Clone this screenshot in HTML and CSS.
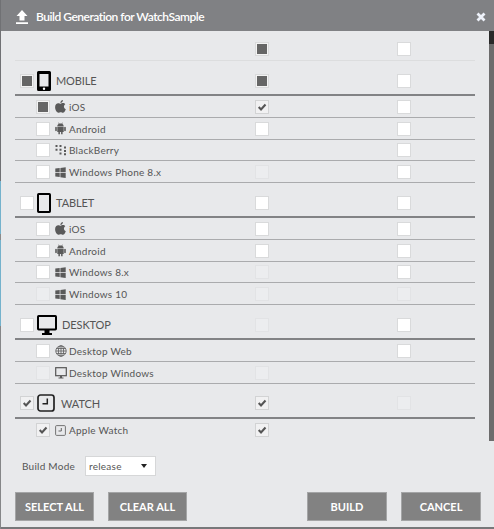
FILE: index.html
```html
<!DOCTYPE html>
<html lang="en">
<head>
<meta charset="utf-8">
<title>Build Generation for WatchSample</title>
<link rel="stylesheet" href="styles.css">
</head>
<body>
<svg class="defs" aria-hidden="true">
  <symbol id="tick" viewBox="0 0 12 12"><path d="M2.7 6.1 5 8.4 9.5 3.5" fill="none" stroke="#555" stroke-width="2.1"/></symbol>
  <symbol id="phone" viewBox="0 0 14 20"><path fill-rule="evenodd" d="M1.5 0h11Q14 0 14 1.500v17Q14 20 12.500 20h-11Q0 20 0 18.500v-17Q0 0 1.500 0ZM2.500 3v12.500h9V3Z"/><circle cx="7" cy="17.700" r="1.200" fill="#fff"/></symbol>
  <symbol id="tablet" viewBox="0 0 14 20"><rect x="1" y="1" width="12" height="18" rx=".7" fill="none" stroke="#000" stroke-width="2"/></symbol>
  <symbol id="monitor" viewBox="0 0 20 20"><rect x="1" y="1" width="18" height="13.500" rx=".7" fill="none" stroke="#000" stroke-width="2"/><path d="M7.500 15h5v3H15v2H5v-2h2.500z"/></symbol>
  <symbol id="watch" viewBox="0 0 18 18"><rect x="1" y="1" width="16" height="16" rx="2.500" fill="none" stroke="#222" stroke-width="1.700"/><path d="M10.300 4.500v5.300H5.500" fill="none" stroke="#222" stroke-width="1.500"/></symbol>
  <symbol id="apple" viewBox="0 0 11 13"><path d="M7.900 0c.1 1.600-1.100 2.900-2.500 3C5.200 1.500 6.500.2 7.900 0ZM5.600 3.700c.6 0 1.300-.6 2.400-.6 1 0 1.800.5 2.300 1.200-2 1.200-1.700 4 .5 4.900-.6 1.700-1.700 3.500-2.900 3.500-.9 0-1.200-.5-2.200-.5s-1.400.5-2.200.5C1.900 12.700.1 9.800.1 7.200c0-2.500 1.500-4 3.100-4 1.100 0 1.800.5 2.400.5Z"/></symbol>
  <symbol id="android" viewBox="0 0 11 13"><path d="M2.300 4.500C2.300 3 3 2.200 3.800 1.800L3.200.8l.4-.2.7 1q1.200-.4 2.400 0l.7-1 .4.2-.6 1c.8.400 1.500 1.200 1.500 2.700ZM2.300 5h6.400v5H7.600v2.300H6.100V10H4.900v2.300H3.400V10H2.300ZM.2 5.200q.8-.8 1.600 0v3.600q-.8.800-1.600 0ZM9.200 5.200q.8-.8 1.600 0v3.600q-.8.800-1.600 0Z"/></symbol>
  <symbol id="berry" viewBox="0 0 12 12"><path d="M.5 1h2v2h-2zM4.500 1h2v2h-2zM.5 4.800h2v2h-2zM4.500 4.800h2v2h-2zM4.500 8.500h2v2h-2zM9 2.500h2v2H9zM9 6h2v2H9zM9 9.200h2v2H9z"/></symbol>
  <symbol id="windows" viewBox="0 0 11 11"><path d="M.3 1.600 4.700 1v4.200H.3ZM5.400.9 10.700.2v5H5.400ZM.3 5.900h4.400v4.200L.3 9.500ZM5.400 5.900h5.300v5l-5.300-.7Z"/></symbol>
  <symbol id="globe" viewBox="0 0 12 12"><g fill="none" stroke="#5a5a5a" stroke-width=".8"><circle cx="6" cy="6" r="5.200"/><ellipse cx="6" cy="6" rx="2.600" ry="5.200"/><path d="M6 .8v10.400M.8 6h10.400M1.500 3.500h9M1.500 8.500h9"/></g></symbol>
  <symbol id="screen" viewBox="0 0 12 12"><rect x=".7" y=".7" width="10.600" height="8" fill="none" stroke="#555" stroke-width="1.200"/><path d="M5 9h2v1.500h1.500v1h-5v-1H5z"/></symbol>
  <symbol id="smallwatch" viewBox="0 0 11 11"><rect x=".6" y=".6" width="9.800" height="9.800" rx="1" fill="none" stroke="#666" stroke-width=".9"/><path d="M6.300 3v3H3.500" fill="none" stroke="#666"/></symbol>
</svg>
<div class="dialog">
  <header class="titlebar">
    <svg class="upload" viewBox="0 0 12 14"><path d="M6 0 11.500 6H8.500v4.500h-5V6h-3ZM0 12.300h12V14H0Z"/></svg>
    <h1>Build Generation for WatchSample</h1>
    <svg class="close" viewBox="0 0 10 10"><path d="M1.500 1.500l7 7M8.500 1.500l-7 7"/></svg>
  </header>
  <main class="list">
    <div class="row top"><div></div><div><i class="box part"></i></div><div><i class="box"></i></div></div>

    <div class="row group"><div class="name"><i class="box part"></i><svg class="i-phone"><use href="#phone"/></svg><span>MOBILE</span></div><div><i class="box part"></i></div><div><i class="box"></i></div></div>
    <div class="row"><div class="name"><i class="box part"></i><svg class="tall"><use href="#apple"/></svg><span>iOS</span></div><div><i class="box"><svg><use href="#tick"/></svg></i></div><div><i class="box"></i></div></div>
    <div class="row"><div class="name"><i class="box"></i><svg class="tall"><use href="#android"/></svg><span>Android</span></div><div><i class="box"></i></div><div><i class="box"></i></div></div>
    <div class="row"><div class="name"><i class="box"></i><svg class="wide"><use href="#berry"/></svg><span>BlackBerry</span></div><div></div><div><i class="box"></i></div></div>
    <div class="row"><div class="name"><i class="box"></i><svg><use href="#windows"/></svg><span>Windows Phone 8.x</span></div><div><i class="box off"></i></div><div><i class="box"></i></div></div>

    <div class="row group"><div class="name"><i class="box"></i><svg class="i-phone"><use href="#tablet"/></svg><span>TABLET</span></div><div><i class="box"></i></div><div><i class="box"></i></div></div>
    <div class="row"><div class="name"><i class="box"></i><svg class="tall"><use href="#apple"/></svg><span>iOS</span></div><div><i class="box"></i></div><div><i class="box"></i></div></div>
    <div class="row"><div class="name"><i class="box"></i><svg class="tall"><use href="#android"/></svg><span>Android</span></div><div><i class="box"></i></div><div><i class="box"></i></div></div>
    <div class="row"><div class="name"><i class="box"></i><svg><use href="#windows"/></svg><span>Windows 8.x</span></div><div><i class="box off"></i></div><div><i class="box"></i></div></div>
    <div class="row"><div class="name"><i class="box off"></i><svg><use href="#windows"/></svg><span>Windows 10</span></div><div><i class="box off"></i></div><div><i class="box off"></i></div></div>

    <div class="row group"><div class="name"><i class="box"></i><svg class="i-monitor"><use href="#monitor"/></svg><span>DESKTOP</span></div><div><i class="box off"></i></div><div><i class="box"></i></div></div>
    <div class="row"><div class="name"><i class="box"></i><svg class="wide"><use href="#globe"/></svg><span>Desktop Web</span></div><div></div><div><i class="box"></i></div></div>
    <div class="row"><div class="name"><i class="box off"></i><svg class="wide"><use href="#screen"/></svg><span>Desktop Windows</span></div><div><i class="box off"></i></div><div></div></div>

    <div class="row group"><div class="name"><i class="box"><svg><use href="#tick"/></svg></i><svg class="i-watch"><use href="#watch"/></svg><span>WATCH</span></div><div><i class="box"><svg><use href="#tick"/></svg></i></div><div><i class="box off"></i></div></div>
    <div class="row last"><div class="name"><i class="box"><svg><use href="#tick"/></svg></i><svg><use href="#smallwatch"/></svg><span>Apple Watch</span></div><div><i class="box"><svg><use href="#tick"/></svg></i></div><div></div></div>
  </main>
  <div class="mode"><label>Build Mode</label><div class="select"><span>release</span><svg viewBox="0 0 6 4"><path d="M0 0h6L3 4z"/></svg></div></div>
  <footer class="actions">
    <button>SELECT ALL</button><button>CLEAR ALL</button><button class="push">BUILD</button><button class="cancel">CANCEL</button>
  </footer>
</div>
<aside class="edge"></aside>
</body>
</html>
```
FILE: styles.css
```css
* { box-sizing: border-box; }
body {
  margin: 0;
  height: 529px;
  overflow: hidden;
  position: relative;
  padding-left: 1px;
  font-family: Lato, sans-serif;
  color: #555;
  background: linear-gradient(#707174 0 181px, #74b2cc 181px 234px, #8a8a8a 234px 240px, #74b2cc 240px 326px, #858688 326px);
}
.defs { position: absolute; width: 0; height: 0; }
.dialog {
  height: 529px;
  background: #e8e9eb;
  border-bottom: 2px solid #77787a;
  display: flex;
  flex-direction: column;
}
.titlebar {
  height: 31px;
  flex: none;
  background: #808184;
  display: flex;
  align-items: center;
  padding: 2px 8px 0 15px;
}
.upload { width: 12px; height: 14px; fill: #fff; }
.titlebar h1 {
  margin: 0 auto 0 8px;
  font-size: 12px;
  font-weight: 600;
  letter-spacing: -0.48px;
  color: #fff;
  white-space: nowrap;
}
.close { width: 10px; height: 10px; stroke: #eef2fa; stroke-width: 2.8; }
.list {
  height: 409px;
  flex: none;
  width: 460px;
  margin-left: 14px;
  overflow: hidden;
}
.row {
  display: grid;
  grid-template-columns: 240px 142px 78px;
  align-items: center;
  height: 21.75px;
  padding-top: 1px;
  border-bottom: 1px solid #aaabad;
}
.row > div { display: flex; align-items: center; }
.row.top { height: 30px; border-color: #dcddde; padding-top: 6px; }
.row.group { height: 35px; border-bottom: 2px solid #828385; padding-top: 6px; }
.row.last { border: 0; padding-top: 2px; }
.name { padding-left: 21px; white-space: nowrap; }
.group .name { padding-left: 5px; }
.name > svg { width: 11px; height: 11px; margin: 0 3px 0 5px; fill: #5a5a5a; flex: none; }
.name > svg.tall { height: 13px; }
.name > svg.wide { width: 12px; height: 12px; margin-right: 2px; }
.name > span { font-size: 10px; letter-spacing: 0.25px; }
.group .name > svg { margin: 0 5px 0 3px; fill: #000; }
.group .name > svg.i-phone { width: 14px; height: 20px; }
.group .name > svg.i-monitor { width: 20px; height: 20px; }
.group .name > svg.i-watch { width: 18px; height: 18px; margin-right: 6px; }
.group .name > span { font-size: 11px; letter-spacing: -0.1px; }
.box {
  width: 14px;
  height: 14px;
  flex: none;
  border: 1px solid #d9dadb;
  background: #fff;
  display: block;
}
.box.part { background: #666; box-shadow: inset 0 0 0 1px #f3f3f3; }
.box.off { border-color: #e2e3e5; background: #ecedef; }
.box:has(svg) { background: #f1f1f2; border-color: #d2d3d4; }
.box svg { width: 12px; height: 12px; display: block; }
.mode {
  margin: 16px 0 0 21px;
  height: 20px;
  display: flex;
  align-items: center;
  font-size: 10px;
  letter-spacing: 0.25px;
}
.mode label { width: 63px; white-space: nowrap; }
.select {
  width: 71px;
  height: 20px;
  border: 1px solid #d6d7d8;
  background: #fff;
  display: flex;
  align-items: center;
  justify-content: space-between;
  padding: 0 8px 0 3px;
}
.select svg { width: 6px; height: 4px; fill: #222; }
.actions {
  display: flex;
  gap: 14px;
  margin: 16px 13px 0 14px;
}
.actions button {
  width: 79px;
  height: 29px;
  padding: 0;
  border: 1px solid #a4a5a6;
  background: #828282;
  color: #fff;
  font: 700 11px Lato, sans-serif;
  letter-spacing: 0;
}
.actions .push { margin-left: auto; }
.actions .push, .actions .cancel { width: 80px; }
.edge {
  position: absolute;
  right: 0;
  top: 31px;
  width: 5px;
  height: 410px;
  background: linear-gradient(#292929 0 13px, #6c6c6c 13px);
}
```
